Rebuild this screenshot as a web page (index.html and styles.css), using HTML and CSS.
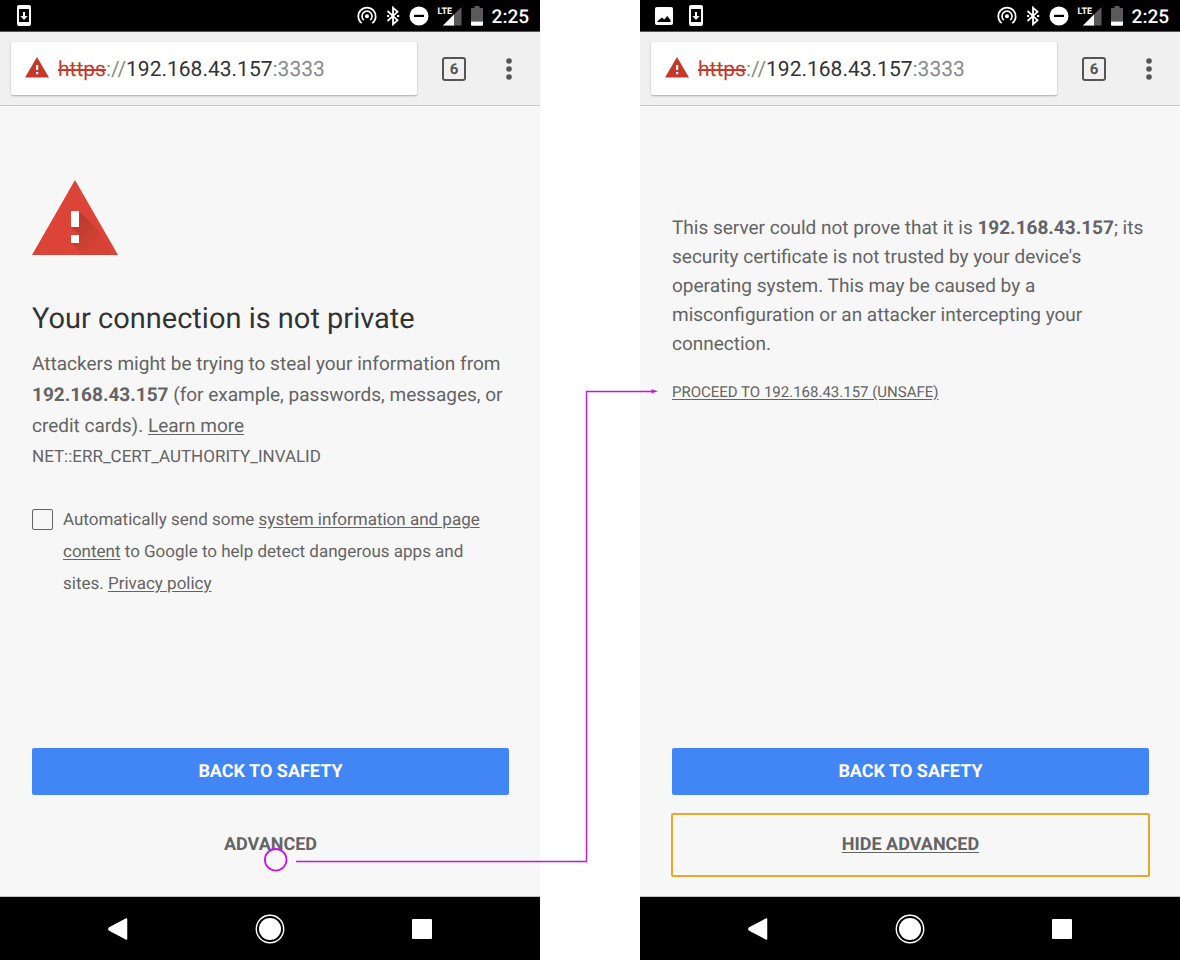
FILE: index.html
```html
<!DOCTYPE html>
<html lang="en">
<head>
  <meta charset="UTF-8" />
  <meta name="viewport" content="width=device-width, initial-scale=1.0" />
  <title>Privacy error</title>
  <link rel="stylesheet" href="styles.css">
</head>
<body>
  <!-- shared icons -->
  <svg class="defs" width="0" height="0" aria-hidden="true">
    <symbol id="icon-download" viewBox="0 0 14 22">
      <path fill="#fff" fill-rule="evenodd" d="M2 0h10a2 2 0 0 1 2 2v17a2 2 0 0 1-2 2H2a2 2 0 0 1-2-2V2a2 2 0 0 1 2-2zM2 4v13h10V4z" />
      <path fill="#fff" d="M6 7h2v4h2.700L7 15 3.300 11H6z" />
    </symbol>
    <symbol id="icon-image" viewBox="0 0 18 18">
      <path fill="#fff" fill-rule="evenodd" d="M2 0h14a2 2 0 0 1 2 2v14a2 2 0 0 1-2 2H2a2 2 0 0 1-2-2V2a2 2 0 0 1 2-2zM2.500 15h13v-2l-3.300-4-3 3.500L7 10.500 2.500 14z" />
    </symbol>
    <symbol id="icon-hotspot" viewBox="0 0 20 20">
      <g fill="none" stroke="#fff" stroke-width="1.700">
        <path d="M4.700 17.200a8.700 8.700 0 1 1 10.600 0" />
        <path d="M6.800 14a5 5 0 1 1 6.400 0" />
      </g>
      <circle cx="10" cy="10.300" r="2" fill="#fff" />
    </symbol>
    <symbol id="icon-bluetooth" viewBox="0 0 14 20">
      <path fill="none" stroke="#fff" stroke-width="1.800" d="M1.500 5l10 9.200L7 18.300V1.700l4.500 4.100-10 9.200" />
      <path fill="#fff" d="M1 9h2.200v2H1zM11 9h2.200v2H11z" />
    </symbol>
    <symbol id="icon-dnd" viewBox="0 0 20 20">
      <circle cx="10" cy="10" r="9.500" fill="#fff" />
      <path d="M5 8.800h10v2.200H5z" />
    </symbol>
    <symbol id="icon-signal" viewBox="0 0 20 20">
      <path fill="#5a5a5a" d="M19.500 1v18.500H1z" />
      <path fill="#fff" d="M12 8.500v11H1z" />
    </symbol>
    <symbol id="icon-battery" viewBox="0 0 12 20">
      <path fill="#5a5a5a" d="M3.500 0h5v2H12v13.500H0V2h3.500z" />
      <path fill="#fff" d="M0 15.500h12V19a.8.800 0 0 1-.8.800H.8A.8.800 0 0 1 0 19z" />
    </symbol>
    <symbol id="icon-insecure" viewBox="0 0 24 21">
      <path fill="#c5392a" d="M12 0l12 20.500H0z" />
      <path fill="#fff" d="M11 8h2.200v5H11zM11 15h2.200v2.200H11z" />
    </symbol>
    <symbol id="icon-back" viewBox="0 0 20 22">
      <path fill="#fff" stroke="#fff" stroke-width="1.500" stroke-linejoin="round" d="M18.500 1v20L1.500 12.200q-1.200-1 0-2.200z" />
    </symbol>
    <symbol id="icon-home" viewBox="0 0 30 30">
      <circle cx="15" cy="15" r="13.700" fill="none" stroke="#fff" stroke-width="1.400" />
      <circle cx="15" cy="15" r="11" fill="#fff" />
    </symbol>
    <symbol id="icon-recent" viewBox="0 0 20 20">
      <rect width="20" height="20" rx="1" fill="#fff" />
    </symbol>
  </svg>

  <main class="flow">
    <section class="phone">
      <div class="status">
        <div class="status-left">
          <svg width="14" height="22"><use href="#icon-download" /></svg>
        </div>
        <div class="status-right">
          <svg width="20" height="20"><use href="#icon-hotspot" /></svg>
          <svg width="14" height="20"><use href="#icon-bluetooth" /></svg>
          <svg width="20" height="20"><use href="#icon-dnd" /></svg>
          <span class="signal"><span class="lte">LTE</span><svg width="20" height="20"><use href="#icon-signal" /></svg></span>
          <svg width="12" height="20"><use href="#icon-battery" /></svg>
          <span class="clock">2:25</span>
        </div>
      </div>
      <header class="toolbar">
        <div class="omnibox">
          <svg width="24" height="21"><use href="#icon-insecure" /></svg>
          <span class="url"><s>https</s>://<b>192.168.43.157</b>:3333</span>
        </div>
        <button class="tabs" aria-label="Open tabs">6</button>
        <button class="menu" aria-label="Menu">
          <svg width="6" height="22" viewBox="0 0 6 22" fill="#555"><circle cx="3" cy="3" r="2.800" /><circle cx="3" cy="11" r="2.800" /><circle cx="3" cy="19" r="2.800" /></svg>
        </button>
      </header>
      <div class="content">
        <svg class="warning" width="86" height="75" viewBox="0 0 86 75">
          <defs>
            <linearGradient id="shade" gradientUnits="userSpaceOnUse" x1="43" y1="42" x2="66" y2="65">
              <stop offset="0" stop-color="#a8322a" stop-opacity=".6" />
              <stop offset="1" stop-color="#a8322a" stop-opacity=".1" />
            </linearGradient>
          </defs>
          <path fill="#db4437" d="M43 0l43 75H0z" />
          <path fill="url(#shade)" d="M47 31l20 20 13.800 24H51L39 63h8v-8l-8-8z" />
          <path fill="#fff" d="M39 31h8v16h-8zM39 55h8v8h-8z" />
        </svg>
        <h1>Your connection is not private</h1>
        <p class="message">Attackers might be trying to steal your information from <strong>192.168.43.157</strong> (for example, passwords, messages, or credit cards). <a href="#">Learn more</a></p>
        <p class="error-code">NET::ERR_CERT_AUTHORITY_INVALID</p>
        <div class="opt-in">
          <input type="checkbox" id="report">
          <label for="report">Automatically send some <a href="#">system information and page content</a> to Google to help detect dangerous apps and sites. <a href="#">Privacy policy</a></label>
        </div>
        <div class="actions">
          <button class="primary">BACK TO SAFETY</button>
          <button class="details">ADVANCED</button>
        </div>
      </div>
      <nav class="navbar">
        <button aria-label="Back"><svg width="20" height="22"><use href="#icon-back" /></svg></button>
        <button aria-label="Home"><svg width="30" height="30"><use href="#icon-home" /></svg></button>
        <button aria-label="Recent apps"><svg width="20" height="20"><use href="#icon-recent" /></svg></button>
      </nav>
    </section>

    <section class="phone">
      <div class="status">
        <div class="status-left">
          <svg width="18" height="18"><use href="#icon-image" /></svg>
          <svg width="14" height="22"><use href="#icon-download" /></svg>
        </div>
        <div class="status-right">
          <svg width="20" height="20"><use href="#icon-hotspot" /></svg>
          <svg width="14" height="20"><use href="#icon-bluetooth" /></svg>
          <svg width="20" height="20"><use href="#icon-dnd" /></svg>
          <span class="signal"><span class="lte">LTE</span><svg width="20" height="20"><use href="#icon-signal" /></svg></span>
          <svg width="12" height="20"><use href="#icon-battery" /></svg>
          <span class="clock">2:25</span>
        </div>
      </div>
      <header class="toolbar">
        <div class="omnibox">
          <svg width="24" height="21"><use href="#icon-insecure" /></svg>
          <span class="url"><s>https</s>://<b>192.168.43.157</b>:3333</span>
        </div>
        <button class="tabs" aria-label="Open tabs">6</button>
        <button class="menu" aria-label="Menu">
          <svg width="6" height="22" viewBox="0 0 6 22" fill="#555"><circle cx="3" cy="3" r="2.800" /><circle cx="3" cy="11" r="2.800" /><circle cx="3" cy="19" r="2.800" /></svg>
        </button>
      </header>
      <div class="content content-advanced">
        <p class="explanation">This server could not prove that it is <strong>192.168.43.157</strong>; its security certificate is not trusted by your device's operating system. This may be caused by a misconfiguration or an attacker intercepting your connection.</p>
        <a class="proceed" href="#">PROCEED TO 192.168.43.157 (UNSAFE)</a>
        <div class="actions">
          <button class="primary">BACK TO SAFETY</button>
          <button class="details focused">HIDE ADVANCED</button>
        </div>
      </div>
      <nav class="navbar">
        <button aria-label="Back"><svg width="20" height="22"><use href="#icon-back" /></svg></button>
        <button aria-label="Home"><svg width="30" height="30"><use href="#icon-home" /></svg></button>
        <button aria-label="Recent apps"><svg width="20" height="20"><use href="#icon-recent" /></svg></button>
      </nav>
    </section>

    <!-- arrow from ADVANCED to the proceed link -->
    <svg class="connector" width="400" height="492" viewBox="0 0 400 492" fill="none" stroke="#c414e4" aria-hidden="true">
      <circle cx="11.700" cy="479.800" r="10.800" stroke-width="1.800" />
      <path stroke-width="1.400" d="M32 481.500h290.500v-470H388" />
      <path fill="#c414e4" stroke="none" d="M394 11.200l-6.500 2v-4z" />
    </svg>
  </main>
</body>
</html>
```
FILE: styles.css
```css
:root {
  --grey: #f7f7f7;
  --text: #646464;
  --heading: #333333;
  --blue: #4285f4;
  --red: #c5392a;
}

* {
  box-sizing: border-box;
}

body {
  margin: 0;
  font-family: Roboto, sans-serif;
  text-rendering: geometricPrecision;
  background-color: #ffffff;
  color: var(--text);
}

button {
  padding: 0;
  border: none;
  background: none;
  font-family: inherit;
  text-rendering: inherit;
  color: inherit;
  cursor: pointer;
}

svg {
  display: block;
  flex: none;
}

.defs {
  position: absolute;
}

.flow {
  position: relative;
  display: flex;
  gap: 100px;
  min-height: 100vh;
}

.phone {
  flex: 1;
  display: flex;
  flex-direction: column;
  background-color: var(--grey);
}

/* status bar */
.status {
  display: flex;
  justify-content: space-between;
  align-items: center;
  height: 32px;
  padding: 0 11px 0 17px;
  background-color: #000;
  border-bottom: 1px solid #555;
  color: #fff;
}

.status-left {
  display: flex;
  align-items: center;
  gap: 16px;
}

.phone + .phone .status {
  padding-left: 15px;
}

.status-right {
  display: flex;
  align-items: center;
  gap: 9px;
}

.signal {
  position: relative;
  padding-left: 4px;
}

.lte {
  position: absolute;
  top: 1px;
  left: 0;
  font-size: 9px;
  line-height: 10px;
  font-weight: 700;
}

.clock {
  font-size: 19px;
  line-height: 30px;
  padding-top: 2px;
  font-weight: 500;
}

/* browser toolbar */
.toolbar {
  display: flex;
  align-items: center;
  height: 74px;
  padding: 0 28px 0 11px;
  background-color: #f0f0f0;
  border-bottom: 1px solid #c8c8c8;
}

.omnibox {
  flex: 1;
  display: flex;
  align-items: center;
  gap: 9px;
  height: 53px;
  padding: 0 14px;
  background-color: #fff;
  border-radius: 2px;
  box-shadow: 0 1px 2px rgba(0, 0, 0, 0.3);
}

.omnibox svg {
  margin-bottom: 2px;
}

.url {
  padding-top: 2px;
  font-size: 21px;
  color: #8a8a8a;
}

.url s {
  color: var(--red);
}

.url b {
  font-weight: 400;
  color: var(--heading);
}

.tabs {
  width: 24px;
  height: 24px;
  margin: 0 40px 0 25px;
  border: 2px solid #555;
  border-radius: 3px;
  font-size: 15px;
  line-height: 20px;
  font-weight: 700;
  color: #555;
}

/* page */
.content {
  flex: 1;
  display: flex;
  flex-direction: column;
  padding: 74px 31px 19px 32px;
}

.content-advanced {
  padding-top: 107px;
}

h1 {
  margin: 44px 0 9px;
  font-size: 29px;
  line-height: 40px;
  font-weight: 400;
  color: var(--heading);
}

p {
  margin: 0;
}

a {
  color: inherit;
  text-underline-offset: 2px;
}

.message {
  font-size: 19px;
  line-height: 31px;
}

.error-code {
  font-size: 17px;
  line-height: 32px;
}

.opt-in {
  display: flex;
  gap: 10px;
  margin-top: 31px;
  padding-right: 20px;
  font-size: 17px;
  line-height: 32px;
}

.opt-in input {
  flex: none;
  appearance: none;
  width: 21px;
  height: 21px;
  margin: 5px 0 0;
  border: 1px solid var(--text);
  border-radius: 2px;
}

.opt-in input:checked {
  background-color: var(--text);
}

.explanation {
  font-size: 19px;
  line-height: 29px;
}

.proceed {
  margin-top: 20px;
  font-size: 15px;
  line-height: 29px;
}

.actions {
  display: flex;
  flex-direction: column;
  gap: 18px;
  margin-top: auto;
}

.primary {
  height: 47px;
  padding-bottom: 1px;
  border-radius: 2px;
  background-color: var(--blue);
  color: #fff;
  font-size: 18px;
  font-weight: 700;
}

.details {
  height: 64px;
  padding-bottom: 2px;
  font-size: 18px;
  font-weight: 700;
}

.focused {
  margin: 0 -1px;
  border: 2px solid #e8a828;
  border-radius: 2px;
  text-decoration: underline;
  text-underline-offset: 2px;
}

/* system navigation */
.navbar {
  display: flex;
  justify-content: center;
  align-items: center;
  gap: 122px;
  height: 64px;
  background-color: #000;
  border-top: 1px solid #c0c0c0;
}

.navbar button {
  display: flex;
  justify-content: center;
  width: 30px;
}

.connector {
  position: absolute;
  top: 380px;
  left: calc(50% - 326px);
  pointer-events: none;
}

@media (max-width: 900px) {
  .flow {
    flex-direction: column;
  }

  .connector {
    display: none;
  }
}
```
